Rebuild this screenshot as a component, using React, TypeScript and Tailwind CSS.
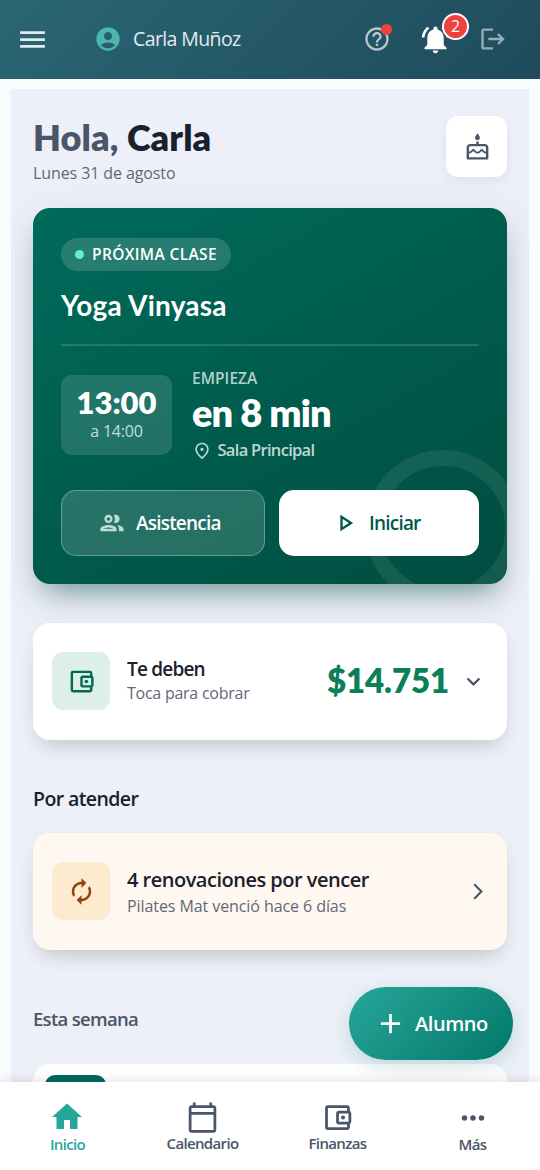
import type { ReactNode } from "react";
import {
  MdMenu,
  MdAccountCircle,
  MdHelpOutline,
  MdNotificationsActive,
  MdLogout,
  MdOutlineCake,
  MdOutlinePlace,
  MdOutlineGroup,
  MdOutlinePlayArrow,
  MdOutlineAccountBalanceWallet,
  MdExpandMore,
  MdAutorenew,
  MdAdd,
  MdHome,
  MdOutlineCalendarToday,
  MdMoreHoriz,
} from "react-icons/md";

function Header() {
  return (
    <header className="flex h-[79px] shrink-0 items-center bg-linear-135 from-[#2a6674] to-[#1f4b5b] pb-px pl-4 text-[#e2ecee]">
      <MdMenu size={33} />
      <MdAccountCircle size={28} className="ml-[45px] text-[#4db6ac]" />
      <span className="ml-[11px] w-[210px] text-[19.5px] leading-[28px] tracking-[-0.6px]">Carla Muñoz</span>
      <span className="relative ml-[20px] text-[#b4c8cf]">
        <MdHelpOutline size={28} />
        <span className="absolute top-[-1px] right-[-1px] size-[11px] rounded-full bg-[#f04141]" />
      </span>
      <span className="relative ml-[28px] text-white">
        <MdNotificationsActive size={33} />
        <span className="absolute top-[-10px] left-[23px] flex size-[27px] items-center justify-center rounded-full border-2 border-white bg-[#f04141] text-[16px] leading-none">
          2
        </span>
      </span>
      <MdLogout size={28} className="ml-[27px] text-[#93afb8]" />
    </header>
  );
}

function NextClass() {
  return (
    <section className="relative flex h-[376px] flex-col items-start overflow-hidden rounded-[17px] bg-linear-[150deg] from-[#006b5b] to-[#004d40] px-7 pt-[30px] text-white">
      <div className="absolute top-[242px] left-[332px] size-[156px] rounded-full border-[16px] border-white/8" />
      <div className="flex h-[33px] w-[170px] items-center rounded-full bg-white/15 pl-[14px]">
        <span className="size-[9px] rounded-full bg-[#64eed0]" />
        <span className="ml-[8px] text-[15.5px] font-semibold tracking-[0.36px] whitespace-nowrap">PRÓXIMA CLASE</span>
      </div>
      <h2 className="mt-[17px] font-[Lato,sans-serif] text-[28px] leading-[34px] font-bold tracking-[0.25px] whitespace-nowrap">
        Yoga Vinyasa
      </h2>
      <div className="mt-[22px] h-[2px] w-full bg-white/14" />
      <div className="mt-[20px] flex h-[98px] items-center">
        <div className="flex h-[80px] w-[111px] flex-col items-center rounded-[11px] bg-white/13 pt-[10px]">
          <span className="font-[Lato,sans-serif] text-[31px] leading-[34px] font-extrabold">13:00</span>
          <span className="mt-px text-[16px] leading-[22px] tracking-[-0.2px] text-[#c6dcd8]">a 14:00</span>
        </div>
        <div className="ml-[20px] flex flex-col">
          <span className="mt-px text-[15.5px] leading-[20px] font-semibold tracking-[0.05px] text-[#b5d0cb]">EMPIEZA</span>
          <span className="mt-[1px] font-[Lato,sans-serif] text-[38px] leading-[46px] font-extrabold tracking-[-0.9px] whitespace-nowrap">
            en 8 min
          </span>
          <span className="mt-[3px] flex h-[26px] items-center text-[#c0d8d3]">
            <MdOutlinePlace size={20} />
            <span className="ml-[5.5px] text-[16.5px] font-semibold tracking-[-0.7px] whitespace-nowrap">Sala Principal</span>
          </span>
        </div>
      </div>
      <div className="relative mt-[26px] flex w-full gap-[14px] text-[19px] font-semibold tracking-[-0.8px]">
        <button className="flex h-[66px] w-[203.5px] items-center rounded-[15px] border border-white/30 bg-white/15 pl-[36px]">
          <MdOutlineGroup size={28} className="text-[#c4dad6]" />
          <span className="ml-[10px]">Asistencia</span>
        </button>
        <button className="flex h-[66px] flex-1 items-center rounded-[15px] bg-white pl-[52px] text-[#00584a]">
          <MdOutlinePlayArrow size={28} />
          <span className="ml-[10.5px]">Iniciar</span>
        </button>
      </div>
    </section>
  );
}

function Row({
  tone,
  iconTone,
  icon,
  text,
  children,
}: {
  tone: string;
  iconTone: string;
  icon: ReactNode;
  text: ReactNode;
  children: ReactNode;
}) {
  return (
    <section
      className={`flex h-[117px] items-center rounded-[17px] pb-px pl-[19.4px] shadow-[0_12px_20px_-8px_rgba(0,0,0,0.17),0_4px_24px_rgba(0,0,0,0.04)] ${tone}`}
    >
      <div className={`flex size-[58px] items-center justify-center rounded-[11px] pl-px ${iconTone}`}>{icon}</div>
      <div className="ml-[16.6px] flex flex-1 flex-col whitespace-nowrap">{text}</div>
      {children}
    </section>
  );
}

function Tab({ icon, label, active }: { icon: ReactNode; label: ReactNode; active?: boolean }) {
  return (
    <div
      className={`flex w-[135px] flex-col items-center ${active ? "pt-[17px] text-[#26a69a]" : "pt-[19px] text-[#4a5568]"}`}
    >
      {icon}
      <span className="-mt-px text-[15px] leading-[20px] font-semibold tracking-[-0.65px]">{label}</span>
    </div>
  );
}

export default function App() {
  return (
    <div className="relative flex h-[1170px] w-[540px] flex-col overflow-hidden bg-[#f9fcfd] font-['Open_Sans','Noto_Sans',sans-serif]">
      <Header />
      <main className="mt-[10px] mr-[11px] ml-[11px] min-h-0 flex-1 overflow-hidden bg-[#edf0f8] px-[22px] pt-[27px]">
        <div className="flex h-[92px] justify-between">
          <div className="flex flex-col">
            <h1 className="font-[Lato,sans-serif] text-[36px] leading-[42px] font-extrabold tracking-[0.1px] text-[#4a5568]">
              Hola, <span className="text-[#1a202c]">Carla</span>
            </h1>
            <span className="mt-[4px] text-[16px] leading-[22px] tracking-[-0.1px] text-[#5f6879]">Lunes 31 de agosto</span>
          </div>
          <button className="flex size-[61px] items-center justify-center rounded-[12px] bg-white pt-[2px] pl-px text-[#4a5568] shadow-[0_4px_12px_rgba(0,0,0,0.06)]">
            <MdOutlineCake size={29} />
          </button>
        </div>
        <div className="rounded-[17px] shadow-[0_18px_28px_-12px_rgba(0,77,64,0.48),0_10px_40px_rgba(60,80,110,0.15)]">
          <NextClass />
        </div>
        <div className="mt-[39px]">
          <Row
            tone="bg-white"
            iconTone="bg-[#deefe9] text-[#006b4d]"
            icon={<MdOutlineAccountBalanceWallet size={29} />}
            text={
              <>
                <span className="text-[19px] leading-[25px] font-semibold tracking-[-0.8px] text-[#1a202c]">Te deben</span>
                <span className="text-[16px] leading-[23px] tracking-[-0.25px] text-[#5f6879]">Toca para cobrar</span>
              </>
            }
          >
            <span className="font-[Lato,sans-serif] text-[33px] font-extrabold tracking-[-0.1px] text-[#0b8058]">$14.751</span>
            <MdExpandMore size={27} className="mr-[20px] ml-[11px] text-[#4a5568]" />
          </Row>
        </div>
        <h3 className="mt-[45px] text-[19.5px] leading-[28px] font-semibold tracking-[-0.6px] text-[#1a202c]">Por atender</h3>
        <div className="mt-[20px]">
          <Row
            tone="bg-[#fff8f0]"
            iconTone="bg-[#fcebcf] text-[#92400e]"
            icon={<MdAutorenew size={29} />}
            text={
              <>
                <span className="mt-[2px] text-[20px] leading-[28px] font-semibold tracking-[-0.5px] text-[#1a202c]">
                  4 renovaciones por vencer
                </span>
                <span className="text-[16px] leading-[24px] tracking-[-0.08px] text-[#5f6879]">
                  Pilates Mat venció hace 6 días
                </span>
              </>
            }
          >
            <svg viewBox="0 0 10 17" className="mr-[24px] h-[17px] w-[10px] text-[#4a5568]" fill="none" stroke="currentColor" strokeWidth="2.1">
              <path d="M1.2 1.2 8.4 8.5 1.2 15.8" />
            </svg>
          </Row>
        </div>
        <h3 className="mt-[55px] text-[18.5px] leading-[28px] font-semibold tracking-[-0.7px] text-[#4a5568]">Esta semana</h3>
        <section className="mt-[31px] h-[120px] rounded-[17px] bg-white pt-[11px] pl-[12px]">
          <div className="h-[80px] w-[61px] rounded-[10px] bg-[#00695c]" />
        </section>
      </main>
      <button className="absolute top-[987px] left-[349px] flex h-[73px] w-[164px] items-center rounded-full bg-linear-135 from-[#26a69a] to-[#00796b] pl-[25px] text-[20px] font-semibold tracking-[-0.45px] text-white shadow-[0_6px_20px_rgba(0,121,107,0.2)]">
        <MdAdd size={33} />
        <span className="ml-[8px]">Alumno</span>
      </button>
      <nav className="relative flex h-[88px] shrink-0 bg-white shadow-[0_-3px_10px_rgba(0,0,0,0.09)]">
        <Tab active icon={<MdHome size={36} className="mr-px" />} label="Inicio" />
        <Tab icon={<MdOutlineCalendarToday size={33} />} label="Calendario" />
        <Tab icon={<MdOutlineAccountBalanceWallet size={33} />} label="Finanzas" />
        <Tab icon={<MdMoreHoriz size={34} />} label="Más" />
      </nav>
    </div>
  );
}
